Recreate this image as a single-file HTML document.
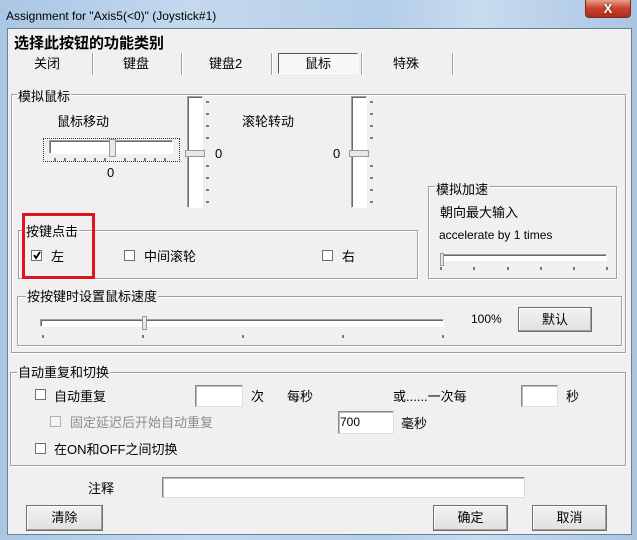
<!DOCTYPE html>
<html><head><meta charset="utf-8"><style>
*{margin:0;padding:0;box-sizing:border-box}
body{width:637px;height:540px;overflow:hidden;position:relative;background:linear-gradient(90deg,#a9c6e4 0%,#c4d9ee 30%,#b4cde8 60%,#c8dcef 75%,#aac5e3 100%);font-family:"Liberation Sans","Noto Sans CJK SC",sans-serif;font-size:13px;color:#000}
.a{position:absolute;white-space:nowrap}
.client{position:absolute;left:7px;top:28px;width:625px;height:507px;background:#f0f0f0;border:1px solid #6d7f94}
.grp{position:absolute;border:1px solid #a0a0a0;box-shadow:1px 1px 0 #fff, inset 1px 1px 0 #fff}
.lbl{position:absolute;background:#f0f0f0;padding:0 1px;white-space:nowrap}
.cb{position:absolute;width:11px;height:11px;border:1px solid #707070;background:#fff}
.inp{position:absolute;background:#fff;border:1px solid #888;border-right-color:#ddd;border-bottom-color:#ddd;box-shadow:inset 1px 1px 0 #bbb}
.btn{position:absolute;border:1px solid #707070;background:linear-gradient(#f2f2f2,#e0e0e0);text-align:center;line-height:23px;box-shadow:inset -1px -1px 0 #a0a0a0,inset 1px 1px 0 #fff}
.sep{position:absolute;width:2px;height:22px;border-left:1px solid #a0a0a0;border-right:1px solid #fff}
.tr{position:absolute;background:#fff;border:1px solid #a0a0a0;border-right-color:#fff;border-bottom-color:#fff;box-shadow:inset 1px 1px 0 #696969}
.g{color:#8c8c8c}
</style></head><body>
<div class="a" style="left:6px;top:9px;font-size:12px">Assignment for "Axis5(&lt;0)" (Joystick#1)</div>
<div class="a" style="left:585px;top:0;width:46px;height:18px;border:1px solid #7a2a20;border-top:none;border-radius:0 0 4px 4px;background:linear-gradient(#e8a090,#c7402c 50%,#b02d1a);color:#fff;font-weight:bold;font-size:13px;text-align:center;line-height:17px;text-shadow:0 0 2px #333">X</div>
<div class="client"></div>
<div class="a" style="left:14px;top:32px;font-size:15px;font-weight:bold">选择此按钮的功能类别</div>
<div class="a" style="left:34px;top:53px">关闭</div>
<div class="sep" style="left:92px;top:53px"></div>
<div class="a" style="left:123px;top:53px">键盘</div>
<div class="sep" style="left:181px;top:53px"></div>
<div class="a" style="left:209px;top:53px">键盘2</div>
<div class="sep" style="left:271px;top:53px"></div>
<div class="a" style="left:278px;top:53px;width:80px;height:21px;border:1px solid #555;border-right-color:#fff;border-bottom-color:#fff;background:repeating-conic-gradient(#eee 0 25%,#fff 0 50%) 0 0/2px 2px;text-align:center;line-height:19px">鼠标</div>
<div class="sep" style="left:361px;top:53px"></div>
<div class="a" style="left:393px;top:53px">特殊</div>
<div class="sep" style="left:452px;top:53px"></div>

<div class="grp" style="left:11px;top:94px;width:615px;height:259px"></div>
<div class="lbl" style="left:17px;top:86px">模拟鼠标</div>
<div class="a" style="left:57px;top:111px">鼠标移动</div>
<div class="a" style="left:43px;top:138px;width:137px;height:24px;border:1px dotted #333"></div>
<div class="tr" style="left:49px;top:140px;width:124px;height:14px"></div>
<div class="a" style="left:109px;top:139px;width:7px;height:18px;background:#e8e8e8;border:1px solid #999"></div>
<div class="a" style="left:107px;top:165px">0</div>
<div class="tr" style="left:187px;top:96px;width:16px;height:112px"></div>
<div class="a" style="left:185px;top:150px;width:20px;height:7px;background:#e8e8e8;border:1px solid #999"></div>
<div class="a" style="left:215px;top:146px">0</div>
<div class="a" style="left:242px;top:111px">滚轮转动</div>
<div class="tr" style="left:351px;top:96px;width:16px;height:112px"></div>
<div class="a" style="left:349px;top:150px;width:20px;height:7px;background:#e8e8e8;border:1px solid #999"></div>
<div class="a" style="left:333px;top:146px">0</div>

<div class="grp" style="left:428px;top:186px;width:189px;height:93px"></div>
<div class="lbl" style="left:435px;top:179px">模拟加速</div>
<div class="a" style="left:440px;top:202px">朝向最大输入</div>
<div class="a" style="left:439px;top:228px;font-size:12px">accelerate by 1 times</div>
<div class="tr" style="left:440px;top:254px;width:167px;height:7px"></div>
<div class="a" style="left:440px;top:253px;width:4px;height:13px;background:#e8e8e8;border:1px solid #999"></div>

<div class="grp" style="left:18px;top:230px;width:400px;height:49px"></div>
<div class="lbl" style="left:25px;top:221px">按键点击</div>
<div class="cb" style="left:31px;top:250px"></div>
<svg class="a" style="left:31px;top:250px" width="11" height="11"><path d="M3 5l2 3 4-6" stroke="#000" stroke-width="1.8" fill="none"/></svg>
<div class="a" style="left:51px;top:246px">左</div>
<div class="cb" style="left:124px;top:250px"></div><div class="a" style="left:144px;top:246px">中间滚轮</div>
<div class="cb" style="left:322px;top:250px"></div><div class="a" style="left:342px;top:246px">右</div>
<div class="a" style="left:22px;top:213px;width:73px;height:66px;border:3px solid #e0141e"></div>

<div class="grp" style="left:17px;top:296px;width:605px;height:50px"></div>
<div class="lbl" style="left:26px;top:286px">按按键时设置鼠标速度</div>
<div class="tr" style="left:40px;top:319px;width:404px;height:8px"></div>
<div class="a" style="left:142px;top:316px;width:5px;height:14px;background:#e8e8e8;border:1px solid #999"></div>
<div class="a" style="left:471px;top:312px;font-size:12px">100%</div>
<div class="btn" style="left:518px;top:307px;width:74px;height:25px">默认</div>

<div class="grp" style="left:10px;top:372px;width:616px;height:94px"></div>
<div class="lbl" style="left:17px;top:362px">自动重复和切换</div>
<div class="cb" style="left:35px;top:389px"></div><div class="a" style="left:54px;top:386px">自动重复</div>
<div class="inp" style="left:195px;top:385px;width:48px;height:22px"></div>
<div class="a" style="left:251px;top:386px">次</div>
<div class="a" style="left:287px;top:386px">每秒</div>
<div class="a" style="left:393px;top:386px">或......一次每</div>
<div class="inp" style="left:521px;top:385px;width:37px;height:22px"></div>
<div class="a" style="left:566px;top:386px">秒</div>
<div class="cb" style="left:50px;top:416px;border-color:#b0b0b0;background:#f4f4f4"></div><div class="a g" style="left:70px;top:412px">固定延迟后开始自动重复</div>
<div class="inp" style="left:338px;top:411px;width:56px;height:23px;font-size:12px;padding:3px 1px">700</div>
<div class="a" style="left:401px;top:413px">毫秒</div>
<div class="cb" style="left:35px;top:443px"></div><div class="a" style="left:54px;top:439px">在ON和OFF之间切换</div>

<div class="a" style="left:88px;top:478px">注释</div>
<div class="inp" style="left:162px;top:477px;width:363px;height:21px"></div>
<div class="btn" style="left:26px;top:505px;width:77px;height:26px">清除</div>
<div class="btn" style="left:433px;top:505px;width:75px;height:26px">确定</div>
<div class="btn" style="left:532px;top:505px;width:75px;height:26px">取消</div>

<svg class="a" style="left:0;top:0" width="637" height="540">
<g stroke="#000" stroke-width="1">
<path d="M55 158v3M65 158v3M75 158v3M85 158v3M95 158v3M105 158v3M125 158v3M135 158v3M145 158v3M155 158v3M165 158v3"/>
<path d="M206 102h3M206 114h3M206 126h3M206 138h3M206 166h3M206 178h3M206 190h3M206 202h3"/>
<path d="M370 102h3M370 114h3M370 126h3M370 138h3M370 166h3M370 178h3M370 190h3M370 202h3"/>
<path d="M441 267v3M474 267v3M508 267v3M541 267v3M574 267v3M607 267v3"/>
<path d="M43 335v3M143 335v3M243 335v3M343 335v3M443 335v3"/>
</g></svg>
</body></html>
